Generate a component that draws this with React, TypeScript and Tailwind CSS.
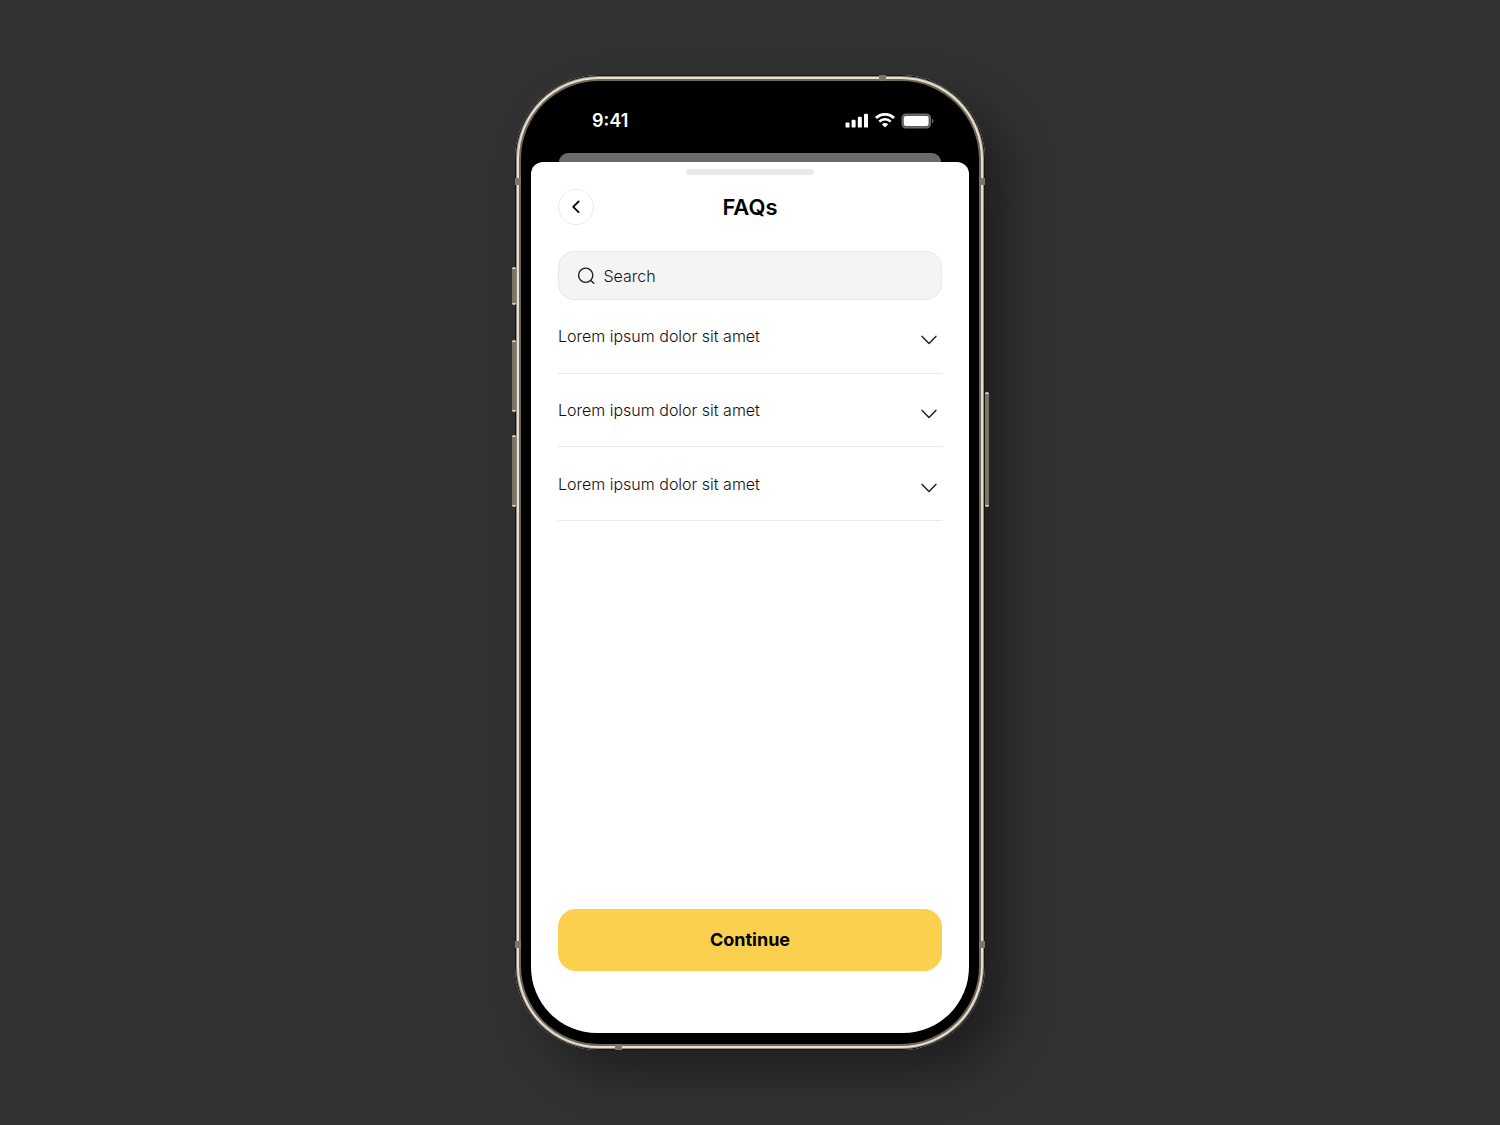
import { useState } from "react";

const faqs = [
  { id: "faq-1", question: "Lorem ipsum dolor sit amet" },
  { id: "faq-2", question: "Lorem ipsum dolor sit amet" },
  { id: "faq-3", question: "Lorem ipsum dolor sit amet" },
];

function SignalIcon() {
  return (
    <svg width="24" height="16" viewBox="0 0 24 16" fill="#fff" aria-hidden="true">
      <rect x="0.5" y="9.4" width="4" height="5.2" rx="1.2" />
      <rect x="6.6" y="6.8" width="4" height="7.8" rx="1.2" />
      <rect x="12.8" y="3.8" width="4" height="10.8" rx="1.2" />
      <rect x="19" y="0.8" width="4" height="13.8" rx="1.2" />
    </svg>
  );
}

function WifiIcon() {
  return (
    <svg width="20" height="16" viewBox="0 0 20 16" fill="none" aria-hidden="true">
      <path d="M1 5.1A12.6 12.6 0 0 1 19 5.1" stroke="#fff" strokeWidth="2.8" />
      <path d="M4.3 8.7A7.9 7.9 0 0 1 15.7 8.7" stroke="#fff" strokeWidth="2.6" />
      <path d="M6.8 11.3A4.4 4.4 0 0 1 13.2 11.3L10.5 14.1Q10 14.6 9.5 14.1Z" fill="#fff" />
    </svg>
  );
}

function BatteryIcon() {
  return (
    <svg width="33" height="16" viewBox="0 0 33 16" fill="none" aria-hidden="true">
      <rect x="1.2" y="1.2" width="28.2" height="13.6" rx="3.8" fill="#5c5c5c" stroke="#6b6b6b" strokeWidth="1.4" />
      <rect x="2.8" y="3" width="24.8" height="10" rx="2" fill="#fff" />
      <path d="M31 5.8Q32.6 6.6 32.6 8T31 10.2Z" fill="#6b6b6b" />
    </svg>
  );
}

function SearchIcon() {
  return (
    <svg width="20" height="20" viewBox="0 0 20 20" fill="none" stroke="#1c1c1c" strokeWidth="1.5" strokeLinecap="round" aria-hidden="true">
      <circle cx="9.4" cy="9.2" r="7.7" />
      <path d="M14.9 14.8L18.2 17.9" />
    </svg>
  );
}

function ChevronLeft() {
  return (
    <svg width="16" height="16" viewBox="0 0 16 16" fill="none" stroke="#000" strokeWidth="1.8" strokeLinecap="round" strokeLinejoin="round" aria-hidden="true">
      <path d="M10.6 2.5L5.2 7.8L10.6 13.1" />
    </svg>
  );
}

function ChevronDown() {
  return (
    <svg width="16" height="10" viewBox="0 0 16 10" fill="none" stroke="#222" strokeWidth="1.5" strokeLinecap="round" strokeLinejoin="round" aria-hidden="true">
      <path d="M1.1 1.4L8 8.5L14.9 1.4" />
    </svg>
  );
}

function DeviceDetails() {
  const key = "absolute w-1 rounded-sm border-y-2 border-[#d8d2c5] bg-[#7d7464]";
  const bandV = "absolute h-[7px] w-[6px] bg-[#7b766b]";
  const bandH = "absolute h-[6px] w-[7px] bg-[#7b766b]";
  return (
    <div aria-hidden="true">
      <span className={`${key} -left-[3px] top-[192px] h-[38px]`} />
      <span className={`${key} -left-[3px] top-[265px] h-[72px]`} />
      <span className={`${key} -left-[3px] top-[360px] h-[72px]`} />
      <span className={`${key} -right-1 top-[317px] h-[115px]`} />
      <span className={`${bandV} left-0 top-[103px]`} />
      <span className={`${bandV} right-0 top-[103px]`} />
      <span className={`${bandV} bottom-[102px] left-0`} />
      <span className={`${bandV} bottom-[102px] right-0`} />
      <span className={`${bandH} right-[99px] top-0`} />
      <span className={`${bandH} bottom-0 left-[100px]`} />
    </div>
  );
}

export default function App() {
  const [query, setQuery] = useState("");

  return (
    <main className="flex min-h-screen items-center justify-center bg-[#323232] font-['Inter',sans-serif] text-black">
      <div className="relative flex min-h-[975px] w-full max-w-[470px] flex-col rounded-[84px] bg-black px-4 pb-[17px] shadow-[inset_0_0_0_1px_#161513,inset_0_0_0_2px_#8f887c,inset_0_0_0_4px_#e6e0d4,inset_0_0_0_6px_#6f6658,24px_24px_48px_rgba(0,0,0,0.38)]">
        <DeviceDetails />

        <header className="flex items-center justify-between pb-5 pl-[61px] pr-[35px] pt-[34px]">
          <time className="text-lg font-semibold leading-6 text-white">9:41</time>
          <div className="flex items-center gap-1.5">
            <SignalIcon />
            <WifiIcon />
            <BatteryIcon />
          </div>
        </header>

        <div className="mx-7 h-[9px] rounded-t-[10px] bg-[#6b6b6b]" />

        <section className="flex flex-1 flex-col rounded-b-[66px] rounded-t-xl bg-white px-[27px] pb-[62px] pt-[7px]">
          <div className="mx-auto h-[6px] w-32 rounded-full bg-[#e9e9e9]" />

          <div className="mt-[14px] grid grid-cols-[36px_1fr_36px] items-center">
            <button
              type="button"
              aria-label="Back"
              className="flex size-9 items-center justify-center rounded-full border border-[#ebebeb]"
            >
              <ChevronLeft />
            </button>
            <h1 className="text-center text-[22px] font-semibold leading-8">FAQs</h1>
          </div>

          <div className="mt-[26px] flex h-[49px] items-center gap-2 rounded-2xl border border-[#e8e8e8] bg-[#f4f4f4] px-[18px]">
            <SearchIcon />
            <input
              type="text"
              aria-label="Search"
              value={query}
              onChange={(e) => setQuery(e.target.value)}
              placeholder="Search"
              className="w-full min-w-0 bg-transparent text-base font-light text-[#111] outline-none placeholder:text-[#111] placeholder:opacity-100"
            />
          </div>

          <ul className="grid h-[221px] auto-rows-fr">
            {faqs.map((faq) => (
              <li key={faq.id} className="border-b border-[#e8e8e8]">
                <button
                  type="button"
                  aria-expanded="false"
                  className="flex h-full w-full items-center justify-between pr-[5px] text-left text-base font-light text-[#111]"
                >
                  {faq.question}
                  <span className="pt-2">
                    <ChevronDown />
                  </span>
                </button>
              </li>
            ))}
          </ul>

          <button
            type="button"
            className="mt-auto h-[62px] w-full rounded-[18px] bg-[#fbd04f] text-lg font-bold leading-6"
          >
            Continue
          </button>
        </section>
      </div>
    </main>
  );
}
